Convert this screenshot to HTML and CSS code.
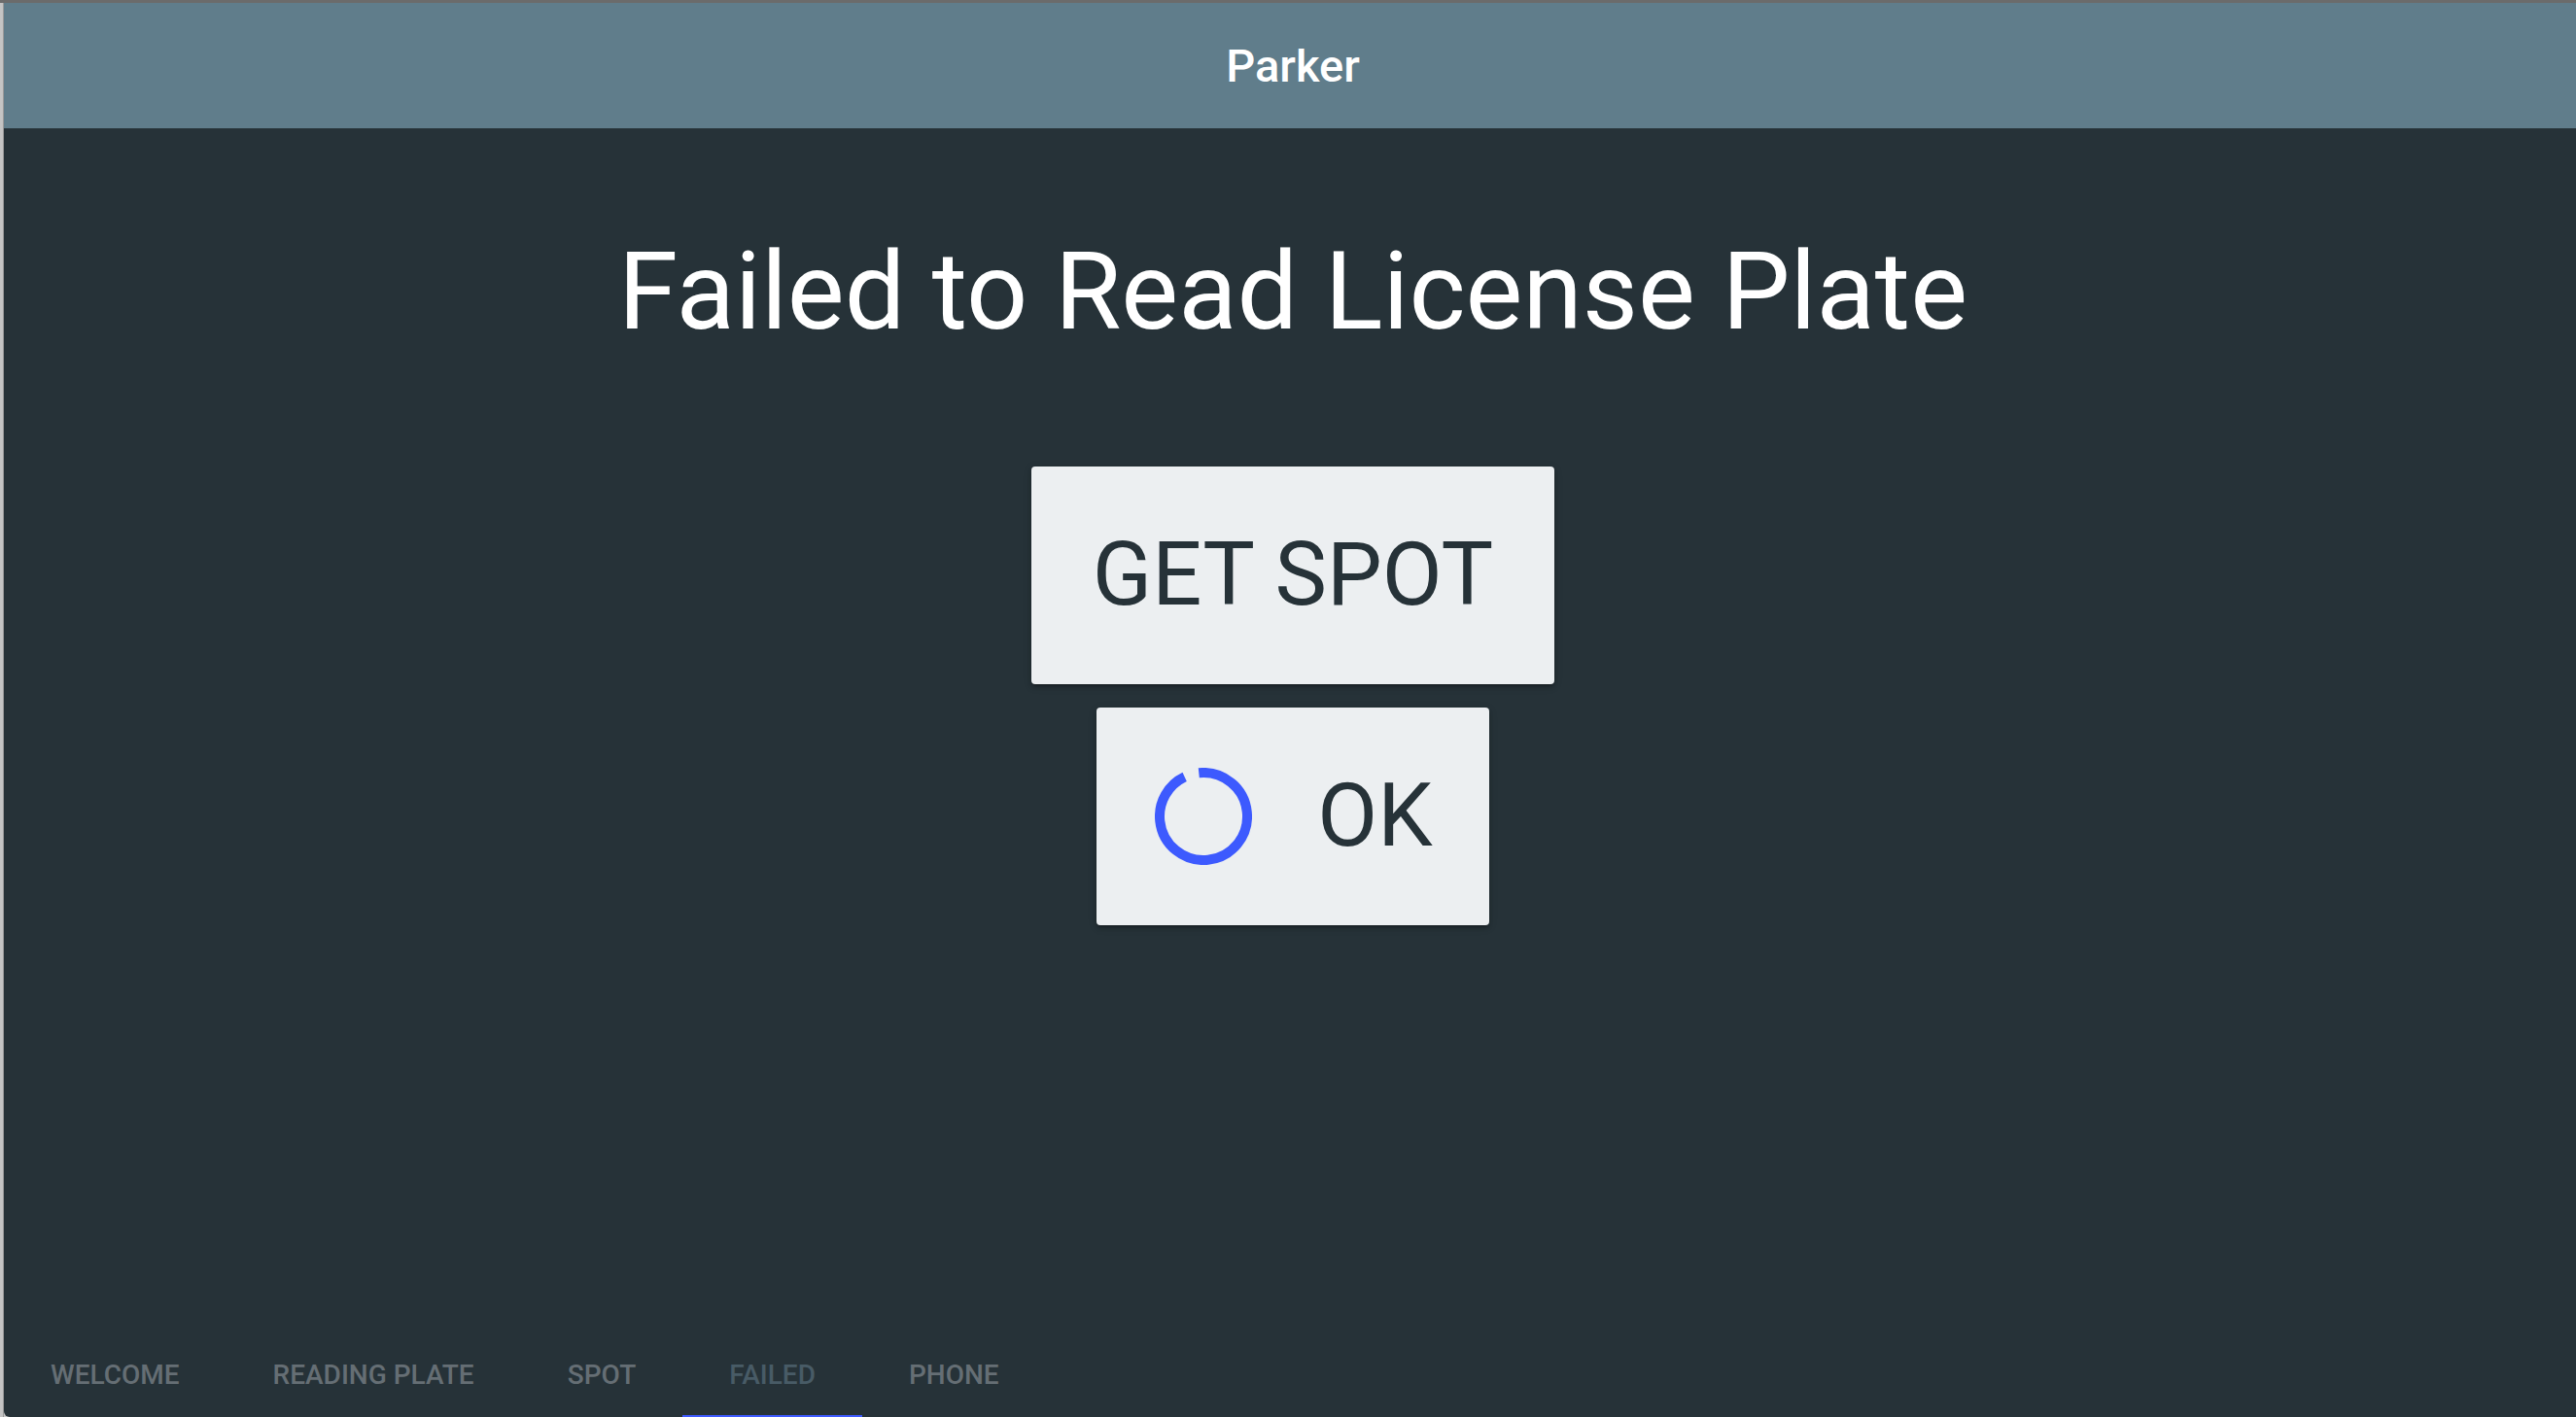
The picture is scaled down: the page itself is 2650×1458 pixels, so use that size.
FILE: index.html
```html
<!DOCTYPE html>
<html lang="en">
<head>
<meta charset="utf-8">
<title>Parker</title>
<link rel="stylesheet" href="styles.css">
</head>
<body>
<div class="screen">
  <div class="topbar"></div>
  <div class="desk">
    <div class="sidestrip"></div>
    <div class="window">
      <div class="app">
        <header class="appbar"><span class="appbar-title">Parker</span></header>
        <main class="content">
          <h1 class="headline">Failed to Read License Plate</h1>
          <div class="actions">
            <button class="btn" type="button"><span class="btn-label">GET SPOT</span></button>
            <button class="btn btn-ok" type="button">
              <svg class="spinner" width="100" height="100" viewBox="0 0 100 100" aria-hidden="true">
                <circle cx="50" cy="50" r="45" fill="none" stroke="#3d5afe" stroke-width="10" stroke-dasharray="267 400" transform="rotate(-96 50 50)"/>
              </svg>
              <span class="btn-label">OK</span>
            </button>
          </div>
        </main>
        <nav class="tabs">
          <div class="tab">Welcome</div>
          <div class="tab">Reading Plate</div>
          <div class="tab">Spot</div>
          <div class="tab tab-active">Failed</div>
          <div class="tab">Phone</div>
        </nav>
      </div>
    </div>
  </div>
</div>
</body>
</html>
```
FILE: styles.css
```css
html, body {
  margin: 0;
  padding: 0;
  overflow: hidden;
  height: 100%;
}
body {
  background: #c6c6c6;
  font-family: Roboto, "Noto Sans", "Liberation Sans", sans-serif;
}
.screen {
  width: 2650px;
  height: 1458px;
  display: flex;
  flex-direction: column;
}
.topbar {
  height: 3px;
  background: #6b6b6b;
  flex: none;
}
.desk {
  flex: 1;
  display: flex;
  min-height: 0;
}
.sidestrip {
  width: 4px;
  flex: none;
  background: #c4c4c4;
  box-shadow: inset -1px 0 0 #9a9a9a;
}
.window {
  flex: 1;
  min-width: 0;
  overflow: hidden;
  border-bottom-left-radius: 6px;
  background: #263238;
}
.app {
  width: 2652px;
  height: 1457px;
  display: flex;
  flex-direction: column;
  background: #263238;
}
.appbar {
  height: 129px;
  flex: none;
  background: #607d8b;
  display: flex;
  align-items: center;
  justify-content: center;
}
.appbar-title {
  color: #ffffff;
  font-size: 47px;
  font-weight: 500;
  line-height: 1;
}
.content {
  flex: 1;
  display: flex;
  flex-direction: column;
  align-items: center;
}
.headline {
  margin: 101px 0 0 0;
  color: #ffffff;
  font-size: 111px;
  font-weight: 400;
  line-height: 134px;
  white-space: nowrap;
}
.actions {
  margin-top: 113px;
  display: flex;
  flex-direction: column;
  align-items: center;
  gap: 24px;
}
.btn {
  height: 224px;
  padding: 0 63px;
  border: none;
  border-radius: 4px;
  background: #eceff1;
  color: #263238;
  font-family: Roboto, "Noto Sans", "Liberation Sans", sans-serif;
  font-size: 90px;
  font-weight: 400;
  line-height: 1;
  display: flex;
  align-items: center;
  justify-content: center;
  box-shadow: 0 3px 2px -2px rgba(0,0,0,0.25), 0 3px 4px 0 rgba(0,0,0,0.16), 0 2px 10px 0 rgba(0,0,0,0.14);
}
.btn-label {
  display: block;
}
.btn-ok {
  padding: 0 58px 0 60px;
  gap: 67px;
}
.spinner {
  display: block;
  flex: none;
}
.tabs {
  height: 96px;
  padding-top: 6px;
  box-sizing: border-box;
  flex: none;
  display: flex;
}
.tab {
  position: relative;
  padding: 0 48px;
  display: flex;
  align-items: center;
  text-transform: uppercase;
  font-size: 28px;
  font-weight: 500;
  line-height: 1;
  color: #656e74;
  white-space: nowrap;
}
.tab-active {
  color: #485b66;
}
.tab-active::after {
  content: "";
  position: absolute;
  left: 0;
  right: 0;
  bottom: 0;
  height: 4px;
  background: #3d5afe;
}
```
